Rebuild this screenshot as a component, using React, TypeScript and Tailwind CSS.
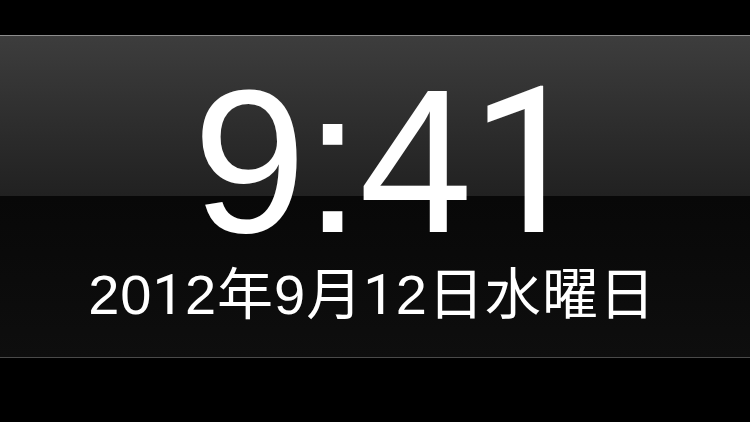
const TIME = '9:41'
const DATE = '2012年9月12日水曜日'

const fontStack =
  "font-['Liberation_Sans','Noto_Sans_CJK_JP',sans-serif]"

// Liberation Sans draws "1" with a foot; the lock screen's Helvetica has none.
function Glyphs({ text }: { text: string }) {
  return (
    <>
      {text.split('').map((ch, i) =>
        ch === '1' ? (
          <span key={i} className="font-['Roboto',sans-serif]">
            1
          </span>
        ) : (
          <span key={i}>{ch}</span>
        )
      )}
    </>
  )
}

export default function App() {
  return (
    <div className={`w-[750px] h-[422px] bg-black flex flex-col ${fontStack}`}>
      {/* top black strip */}
      <div className="h-[35px]" />

      {/* lock-screen clock band */}
      <div className="relative border-t border-b border-t-[#8c8c8c] border-b-[#4a4a4a]">
        <div className="absolute inset-x-0 top-0 h-[160px] bg-gradient-to-b from-[#3d3d3d] to-[#212121]" />
        <div className="absolute inset-x-0 bottom-0 h-[161px] bg-gradient-to-b from-[#080808] to-[#0e0e0e]" />

        <div className="relative h-[321px] flex flex-col items-center pt-[23px] text-white">
          <div className="text-[204px] leading-none font-normal tracking-[-2px] pl-[26px]">
            <Glyphs text={TIME} />
          </div>
          <div className="mt-[2px] text-[56px] leading-none font-normal tracking-[1px] pr-[6px]">
            <Glyphs text={DATE} />
          </div>
        </div>
      </div>
    </div>
  )
}
